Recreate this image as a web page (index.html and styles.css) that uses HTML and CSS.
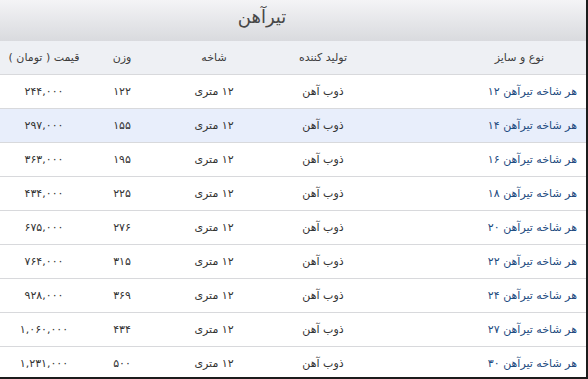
FILE: index.html
```html
<!DOCTYPE html>
<html lang="fa" dir="rtl">
<head>
<meta charset="utf-8">
<link rel="stylesheet" href="styles.css">
</head>
<body>
<div class="box">
  <div class="title">تیرآهن</div>
  <table class="prices">
    <colgroup>
      <col class="c-type"><col class="c-maker"><col class="c-len"><col class="c-weight"><col class="c-price">
    </colgroup>
    <thead>
      <tr><th class="type-h">نوع و سایز</th><th>تولید کننده</th><th>شاخه</th><th>وزن</th><th>قیمت ( تومان )</th></tr>
    </thead>
    <tbody>
      <tr><td class="name">هر شاخه تیرآهن ۱۲</td><td>ذوب آهن</td><td>۱۲ متری</td><td>۱۲۲</td><td>۲۴۴,۰۰۰</td></tr>
      <tr class="hl"><td class="name">هر شاخه تیرآهن ۱۴</td><td>ذوب آهن</td><td>۱۲ متری</td><td>۱۵۵</td><td>۲۹۷,۰۰۰</td></tr>
      <tr><td class="name">هر شاخه تیرآهن ۱۶</td><td>ذوب آهن</td><td>۱۲ متری</td><td>۱۹۵</td><td>۳۶۳,۰۰۰</td></tr>
      <tr><td class="name">هر شاخه تیرآهن ۱۸</td><td>ذوب آهن</td><td>۱۲ متری</td><td>۲۲۵</td><td>۴۳۴,۰۰۰</td></tr>
      <tr><td class="name">هر شاخه تیرآهن ۲۰</td><td>ذوب آهن</td><td>۱۲ متری</td><td>۲۷۶</td><td>۶۷۵,۰۰۰</td></tr>
      <tr><td class="name">هر شاخه تیرآهن ۲۲</td><td>ذوب آهن</td><td>۱۲ متری</td><td>۳۱۵</td><td>۷۶۴,۰۰۰</td></tr>
      <tr><td class="name">هر شاخه تیرآهن ۲۴</td><td>ذوب آهن</td><td>۱۲ متری</td><td>۳۶۹</td><td>۹۲۸,۰۰۰</td></tr>
      <tr><td class="name">هر شاخه تیرآهن ۲۷</td><td>ذوب آهن</td><td>۱۲ متری</td><td>۴۳۴</td><td>۱,۰۶۰,۰۰۰</td></tr>
      <tr><td class="name">هر شاخه تیرآهن ۳۰</td><td>ذوب آهن</td><td>۱۲ متری</td><td>۵۰۰</td><td>۱,۲۳۱,۰۰۰</td></tr>
    </tbody>
  </table>
</div>
</body>
</html>
```

FILE: styles.css
```css
html, body {
  margin: 0;
  padding: 0;
  background: #ffffff;
}
.box {
  width: 588px;
  height: 379px;
  box-sizing: border-box;
  border-right: 2px solid #1c1c1c;
  border-bottom: 2px solid #1c1c1c;
  overflow: hidden;
  font-family: "DejaVu Sans", sans-serif;
  direction: rtl;
}
.title {
  height: 41px;
  box-sizing: border-box;
  background: linear-gradient(to bottom, #f4f4f6 0%, #e6e7ea 50%, #d9dade 100%);
  color: #474747;
  font-size: 18px;
  line-height: 34px;
  text-align: center;
  padding-right: 62px;
}
.prices {
  width: 586px;
  table-layout: fixed;
  border-collapse: collapse;
  border-spacing: 0;
}
.c-type { width: 212px; }
.c-maker { width: 102px; }
.c-len { width: 116px; }
.c-weight { width: 68px; }
.c-price { width: 88px; }
.prices th, .prices td {
  height: 33px;
  padding: 0;
  border-bottom: 1px solid #d8d9dc;
  text-align: center;
  font-size: 11px;
  font-weight: normal;
  color: #333333;
  white-space: nowrap;
}
.prices th {
  background: #eef0f4;
  color: #3c3c3c;
}
.prices th.type-h {
  text-align: right;
  padding-right: 42px;
}
.prices td.name {
  text-align: right;
  padding-right: 9px;
  color: #1d4a80;
}
.prices tr.hl td {
  background: #e8eefb;
}
```
